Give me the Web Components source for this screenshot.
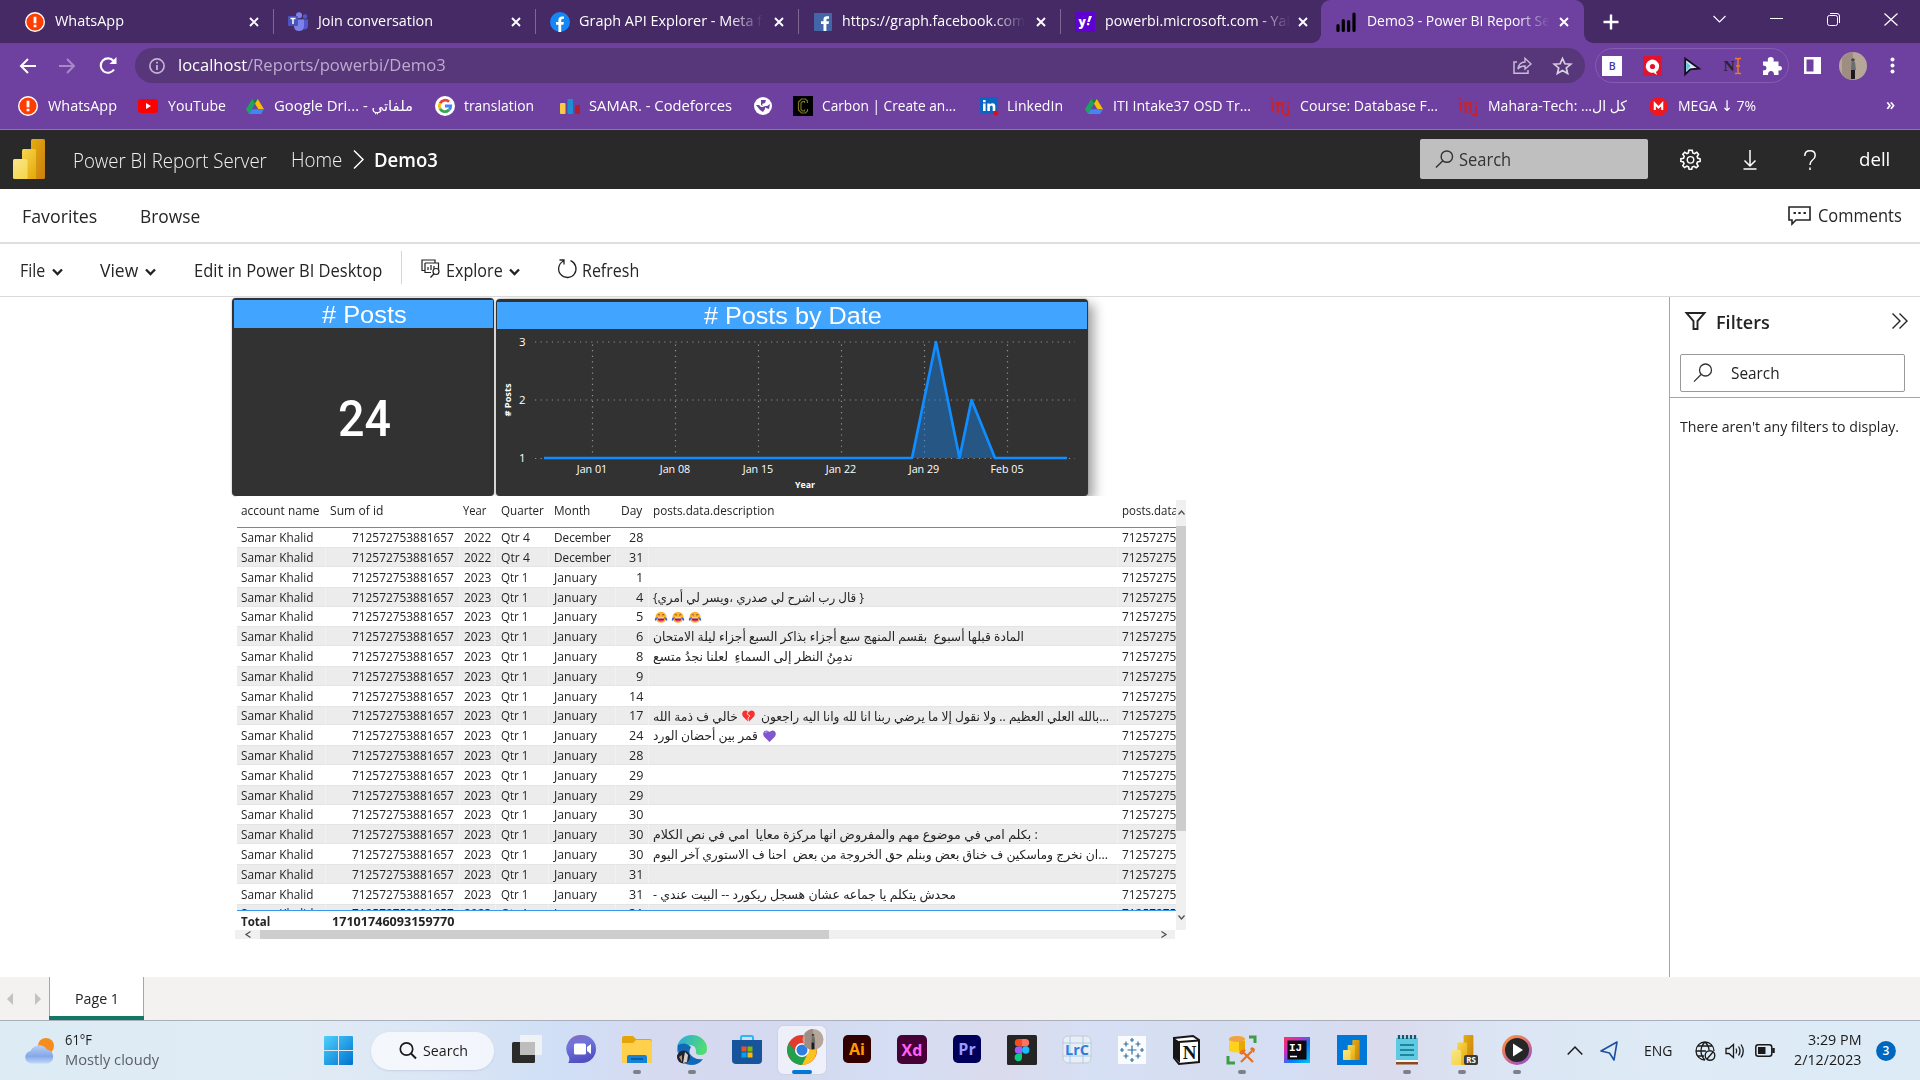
<!DOCTYPE html>
<html lang="en">
<head>
<meta charset="utf-8">
<title>Demo3 - Power BI Report Server</title>
<style>
html,body{margin:0;padding:0;width:1920px;height:1080px;overflow:hidden;background:#fff;font-family:"Open Sans","Noto Sans","DejaVu Sans",sans-serif}
</style>
</head>
<body>
<desktop-screen></desktop-screen>
<script>
const BASE = `<style>:host{display:block}*{box-sizing:border-box}.r{display:flex;align-items:center;width:100%}.c{flex:none;display:flex;align-items:center}svg{display:block;overflow:visible;flex:none}</style>`;

/* A row of items: each is [left, right, html, marginTop]. */
function row(height, items, start = 0, style = '') {
  let end = start, out = '';
  for (const [a, b, html, mt] of items) {
    out += `<div class="c" style="margin-left:${(a - end).toFixed(2)}px;width:${(b - a).toFixed(2)}px;${mt ? `margin-top:${mt}px;` : ''}">${html}</div>`;
    end = b;
  }
  return `<div class="r" style="height:${height}px;${style}">${out}</div>`;
}
function txt(a, b, s, size, style = '', mt = 0) {
  const l = a - .03 * size, r = b + .04 * size;
  return [l, r, `<fit-text w="${(r - l).toFixed(2)}" style="font-size:${size}px;${style}">${s}</fit-text>`, mt];
}
function ico(a, b, h, vb, body, mt = 0) {
  return [a, b, `<svg width="${b - a}" height="${h}" viewBox="${vb}" preserveAspectRatio="none">${body}</svg>`, mt];
}
function define(name, html) {
  customElements.define(name, class extends HTMLElement {
    constructor() {
      super();
      this.attachShadow({ mode: 'open' }).innerHTML = BASE + html;
    }
  });
}

customElements.define('fit-text', class extends HTMLElement {
  constructor() {
    super();
    this.attachShadow({ mode: 'open' }).innerHTML =
      `<style>:host{display:block;white-space:pre;line-height:1.36;flex:none}span{display:inline-block;transform-origin:0 50%}</style><span><slot></slot></span>`;
  }
  connectedCallback() {
    const w = +this.getAttribute('w'), s = this.shadowRoot.querySelector('span');
    this.style.width = w + 'px';
    const n = s.getBoundingClientRect().width;
    if (n) s.style.transform = `scaleX(${w / n})`;
  }
});

/* ---------- shared glyphs ---------- */
const alertG = `<circle cx="10" cy="10" r="10" fill="#fff"/><circle cx="10" cy="10" r="8.6" fill="#ff3d00"/><path d="M8.6 4.8h2.8v6.4H8.6zM8.6 12.7h2.8v2.6H8.6z" fill="#fff"/>`;
const closeX = `<path d="M1 1l8 8M9 1l-8 8" stroke="#fff" stroke-width="1.9"/>`;
const driveG = `<path d="M6.2 1h5.6L18 12h-5.6z" fill="#fbbc04"/><path d="M6.2 1L9 6 3 17 0 12z" fill="#1ea362"/><path d="M5.8 12H18l-3 5H3z" fill="#4285f4"/><path d="M9 6l2.8-5H6.2z" fill="#188038"/>`;
const itiG = `<g stroke="#c4242f" stroke-width="2.4" fill="none"><path d="M2 5v9M1 1v2M7 16V5M5 6.500h9M12 7v9M18 9v9h-5M18 4v2"/></g>`;
const pbiG = (o = '') => `<defs><linearGradient id="a${o}" x2="1" y2="1"><stop stop-color="#e6ad10"/><stop offset="1" stop-color="#c87e0e"/></linearGradient><linearGradient id="b${o}" x2=".7" y2="1"><stop stop-color="#f6d751"/><stop offset="1" stop-color="#e6ad10"/></linearGradient><linearGradient id="c${o}" x2=".6" y2="1"><stop stop-color="#f9e589"/><stop offset="1" stop-color="#f6d751"/></linearGradient></defs><rect x="18" width="14" height="40" rx="1.500" fill="url(#a${o})"/><path d="M9 11.500q0-1.500 1.500-1.500H21.500q1.500 0 1.500 1.500V40H9z" fill="url(#b${o})"/><path d="M0 21.500Q0 20 1.500 20H12.500q2 0 2 2V40H1.500Q0 40 0 38.500z" fill="url(#c${o})"/>`;
const avatar = `<circle cx="14" cy="14" r="14" fill="#b7a69a"/><path d="M3 6Q8 0 14 0v28Q6 27 3 22z" fill="#9e8d82"/><circle cx="14" cy="8" r="1.800" fill="#54413a"/><path d="M12.500 10h3.500l1 8h-5z" fill="#66716f"/><path d="M12 18h4v9h-4z" fill="#1d1a1e"/>`;
const chev = c => `<path d="M1 1.500l4.500 4.500L10 1.500" fill="none" stroke="${c}" stroke-width="2.300"/>`;
const mag = (c, w = 1.4) => `<circle cx="12.500" cy="7" r="6" fill="none" stroke="${c}" stroke-width="${w}"/><path d="M8.300 11.300L1 18.600" stroke="${c}" stroke-width="${w}"/>`;

/* ---------- browser window ---------- */
const tt = (a, b, s, fade) => txt(a, b, s, 14.6, 'color:#fff;' + (fade ? '-webkit-mask:linear-gradient(90deg,#000 calc(100% - 34px),transparent);mask:linear-gradient(90deg,#000 calc(100% - 34px),transparent)' : ''), -1);
const sep = x => [x, x + 1, `<i style="width:1px;height:25px;background:#7d6793"></i>`];
const cl = x => ico(x - 5, x + 5, 10, '0 0 10 10', closeX);

define('tab-strip', `<style>:host{background:#462a65;height:43px}.t{display:flex}.a{background:#6e40a0;width:263px;height:43px;border-radius:9px 9px 0 0;flex:none;position:relative}.a:before,.a:after{content:"";position:absolute;bottom:0;width:9px;height:9px;background:radial-gradient(circle at 0 0,transparent 8.500px,#6e40a0 9px)}.a:before{left:-9px}.a:after{right:-9px;background:radial-gradient(circle at 100% 0,transparent 8.500px,#6e40a0 9px)}</style>
<div class="t">${row(43, [
  ico(25, 45, 20, '0 0 20 20', alertG), tt(55, 123, 'WhatsApp'), cl(254), sep(273),
  ico(288, 308, 19, '0 0 20 19', `<circle cx="11" cy="3.200" r="3" fill="#7b83eb"/><circle cx="17" cy="4.500" r="2.200" fill="#5059c9"/><path d="M13 7.500h7v6q0 4-4 4h-3z" fill="#5059c9"/><path d="M6 7.500h10v6q0 5.500-5 5.500t-5-5z" fill="#7b83eb"/><rect y="4" width="10" height="10" rx="1" fill="#4b53bc"/><path d="M2.500 6.500h5M5 6.500v5.500" stroke="#fff" stroke-width="1.500"/>`),
  tt(318, 432, 'Join conversation'), cl(516), sep(535),
  ico(550, 570, 20, '0 0 20 20', `<circle cx="10" cy="10" r="10" fill="#1586f5"/><path d="M8.400 20v-7.200H6V10h2.400V8q0-3.600 3.600-3.600h2v2.400h-1.300q-1.500 0-1.500 1.500V10h2.700l-.5 2.800h-2.200V20z" fill="#fff"/>`),
  tt(580, 762, 'Graph API Explorer - Meta f', 1), cl(779), sep(798),
  ico(814, 832, 18, '0 0 18 18', `<rect width="18" height="18" rx="1" fill="#4267a9"/><path d="M9.500 18v-7H7V8.300h2.500V6.500q0-3.300 3.300-3.300H15v2.600h-1.300q-1.300 0-1.300 1.200v1.300H15l-.4 2.700h-2.200v7z" fill="#fff"/>`),
  tt(843, 1025, 'https://graph.facebook.com', 1), cl(1041), sep(1060),
  ico(1075, 1095, 20, '0 0 20 20', `<rect width="20" height="20" fill="#5f01d1"/><text x="3.500" y="13.500" font-family="Open Sans" font-weight="800" font-size="12" fill="#fff">y</text><path d="M14 4h3l-2.400 6h-2.200zM12 11h2.200v2.200H12z" fill="#fff"/>`),
  tt(1106, 1290, 'powerbi.microsoft.com - Yal', 1), cl(1303)], 0, 'width:1321px;flex:none')}
<div class="a">${row(43, [
  ico(1336, 1356, 20, '0 0 20 20', `<path d="M2 18.500v-5M7.300 18.500v-10M12.600 18.500v-9M18 18.500V2" stroke="#000" stroke-width="3.200" stroke-linecap="round"/>`),
  tt(1367, 1549, 'Demo3 - Power BI Report Se', 1), cl(1564)], 1321)}</div>
${row(43, [ico(1603, 1619, 16, '0 0 16 16', `<path d="M8 .5v15M.5 8h15" stroke="#fff" stroke-width="2.400"/>`),
  ico(1713, 1726, 8, '0 0 13 8', `<path d="M.5 1l6 6 6-6" fill="none" stroke="#fff" stroke-width="1.100"/>`, -5),
  ico(1770, 1783, 2, '0 0 13 2', `<path d="M0 .500h13" stroke="#fff"/>`, -5),
  ico(1827, 1840, 13, '0 0 13 13', `<rect x=".5" y="2.500" width="10" height="10" rx="2" fill="none" stroke="#fff"/><path d="M3 .5h7q2.500 0 2.500 2.500v7" fill="none" stroke="#fff"/>`, -5),
  ico(1884, 1898, 13, '0 0 14 13', `<path d="M.5.5l13 12M13.500.5l-13 12" stroke="#fff" stroke-width="1.200"/>`, -5)], 1584, 'width:336px;flex:none')}</div>`);

define('address-bar', `<style>:host{height:45px;padding-top:5px;background:#6e40a0}.x{display:flex}.o{background:#573779;border-radius:18px;width:1450px;height:35px}.e{width:194px;height:35px;border:1px solid #845cb0;border-radius:18px;margin-left:10px;flex:none}</style>
<div class="x">${row(35, [
  ico(19, 36, 16, '0 0 17 16', `<path d="M17 8H2M9 1L2 8l7 7" fill="none" stroke="#fff" stroke-width="2"/>`),
  ico(59, 76, 16, '0 0 17 16', `<path d="M0 8h15M8 1l7 7-7 7" fill="none" stroke="#a78ac5" stroke-width="2"/>`),
  ico(99, 117, 17, '0 0 18 17', `<path d="M15 12.500A7.200 7.200 0 1 1 14.500 4" fill="none" stroke="#fff" stroke-width="2.100"/><path d="M17.500 0v7h-7z" fill="#fff"/>`)], 0, 'width:135px;flex:none')}
<div class="o">${row(35, [
  ico(149, 165, 16, '0 0 16 16', `<circle cx="8" cy="8" r="7.100" fill="none" stroke="#c3b4d3" stroke-width="1.700"/><path d="M8 7v5M8 3.800v1.800" stroke="#c3b4d3" stroke-width="1.800"/>`),
  txt(178.500, 246.500, 'localhost', 16.8, 'color:#fff'), txt(247.500, 445, '/Reports/powerbi/Demo3', 16.8, 'color:#bcabcf'),
  ico(1513, 1532, 17, '0 0 19 17', `<path d="M4 5H1v11.300h14V13" fill="none" stroke="#c9bad9" stroke-width="1.500"/><path d="M5 12q1-7 7-7V1.300L18 7l-6 5V9Q7 9 5 12z" fill="none" stroke="#c9bad9" stroke-width="1.400"/>`),
  ico(1553, 1572, 18, '0 0 24 24', `<path d="M12 2l3 7 7.500.6-5.700 5 1.700 7.400L12 18l-6.500 4 1.700-7.400-5.700-5L9 9z" fill="none" stroke="#d8cde3" stroke-width="2.200"/>`)], 135)}</div>
<div class="e">${row(33, [
  ico(1602, 1622, 20, '0 0 20 20', `<rect width="20" height="20" fill="#fff"/><text x="6.700" y="14" font-family="Open Sans" font-size="10.500" font-weight="600" fill="#3f3aa5">B</text>`),
  ico(1643, 1662, 20, '0 0 19 20', `<rect width="19" height="20" fill="#e0142c"/><path d="M9 17a6.700 6.700 0 1 1 4-1l1 3-3-2q-3-2-3-4 0-3 2-3t2 3l3 1" fill="#fff"/><circle cx="9.500" cy="10.500" r="2.600" fill="#e0142c"/>`),
  ico(1684, 1700, 18, '0 0 16 18', `<path d="M1.200 1.500v15.800l5-5 8.800-.8z" fill="#dfeaf5" stroke="#150f22" stroke-width="1.900"/><path d="M2.500 5l4 4-4 5z" fill="#52cbe8"/>`),
  ico(1724, 1742, 18, '0 0 18 18', `<text x="-.5" y="14" font-family="Liberation Serif" font-size="15.500" font-weight="bold" fill="#2a2231">N</text><path d="M11 1.500h2q1 0 1 1 0-1 1-1h2M14 2v14M11 16.500h2q1 0 1-1 0 1 1 1h2M12 9h4" stroke="#f07a28" stroke-width="1.400" fill="none"/>`),
  ico(1763, 1782, 18, '0 0 19 18', `<path d="M0 4.500h5Q4 0 7.800 0T10.500 4.500H15.500V9q3.500-.5 3.500 2.200t-3.500 2.300V18H11q0-4-3-4t-3 4H0v-4.500q3.500 0 3.500-2.500T0 8.500z" fill="#fff"/>`)], 1596)}</div>
${row(35, [
  ico(1804, 1821, 17, '0 0 17 17', `<path d="M0 0h17v17H0zM2.500 2.500v12h7v-12z" fill="#fff" fill-rule="evenodd"/>`),
  ico(1839, 1867, 28, '0 0 28 28', avatar),
  ico(1890, 1895, 17, '0 0 5 17', `<circle cx="2.500" cy="2.500" r="2" fill="#fff"/><circle cx="2.500" cy="8.500" r="2" fill="#fff"/><circle cx="2.500" cy="14.500" r="2" fill="#fff"/>`)], 1789, 'width:131px;flex:none')}</div>`);

const bt = (a, b, s) => txt(a, b, s, 14.6, 'color:#fff', -1);
define('bookmark-bar', `<style>:host{height:42px;background:#6e40a0;border-bottom:1px solid #9470ba}</style>${row(36, [
  ico(18, 38, 20, '0 0 20 20', alertG), bt(48, 116, 'WhatsApp'),
  ico(138, 158, 14, '0 0 20 14', `<rect width="20" height="14" rx="3" fill="#f00"/><path d="M8 4v6l5-3z" fill="#fff"/>`), bt(168, 225, 'YouTube'),
  ico(246, 264, 17, '0 0 18 18', driveG), bt(275, 413, 'Google Dri... - ملفاتي'),
  ico(435, 455, 20, '0 0 20 20', `<circle cx="10" cy="10" r="10" fill="#fff"/><g fill="none" stroke-width="2.800"><path d="M14 5.800A5.700 5.700 0 0 0 5 7.300" stroke="#ea4335"/><path d="M5 7.300a5.700 5.700 0 0 0 0 5.400" stroke="#fbbc05"/><path d="M5 12.700a5.700 5.700 0 0 0 8.800 1.400" stroke="#34a853"/><path d="M13.800 14.100Q15.800 12.500 15.700 10H10" stroke="#4285f4"/></g>`), bt(465, 534, 'translation'),
  ico(560, 580, 17, '0 0 20 17', `<rect y="5" width="5.500" height="11" rx="1" fill="#f8cb45"/><rect x="7.500" y="1" width="5.500" height="15" rx="1" fill="#1c8fce"/><rect x="15" y="7" width="5" height="9" rx="1" fill="#b61e2b"/>`), bt(590, 732, 'SAMAR. - Codeforces'),
  ico(754, 772, 18, '0 0 18 18', `<circle cx="9" cy="9" r="9" fill="#fff"/><path d="M2 8l3 0 2 2 4 0 0 2-2 3-3-2zM7 3l5 0-1 3-3 1 1 2 4 0 3-2-1 5-3-1-1-1-4-2z" fill="#6e40a0"/>`),
  ico(793, 813, 20, '0 0 20 20', `<rect width="20" height="20" fill="#000"/><path d="M14.500 7V5l-2-2h-4l-3 3v8l3 3h4l2-2v-2M11.500 7V5.500h-2L8 7v6.500L9.500 15h2v-1.500" fill="none" stroke="#7a7320" stroke-width="1.200"/>`), bt(823, 956, 'Carbon | Create an...'),
  ico(980, 998, 18, '0 0 18 18', `<rect width="18" height="17" rx="1" fill="#0a66c2"/><path d="M3 6.500h2.600V14H3zM3 3h2.600v2.200H3zM7.300 6.500h2.500v1q1-1.300 2.600-1.300 2.900 0 2.900 3.300V14h-2.600V10q0-1.600-1.300-1.600T9.900 10v4H7.300z" fill="#fff"/><circle cx="16" cy="16" r="2.500" fill="#d11124"/>`), bt(1008, 1063, 'LinkedIn'),
  ico(1085, 1103, 17, '0 0 18 18', driveG), bt(1114, 1251, 'ITI Intake37 OSD Tr...'),
  ico(1271, 1290, 19, '0 0 20 19', itiG), bt(1301, 1438, 'Course: Database F...'),
  ico(1459, 1478, 19, '0 0 20 19', itiG), bt(1489, 1627, 'Mahara-Tech: ...كل ال'),
  ico(1649, 1668, 19, '0 0 19 19', `<circle cx="9.500" cy="9.500" r="9.500" fill="#f0161e"/><path d="M5.800 13V6.700l3.700 3.800 3.700-3.800V13" fill="none" stroke="#fff" stroke-width="2.100"/>`), bt(1679, 1756, 'MEGA ↓ 7%'),
  txt(1887, 1895, '»', 17, 'color:#fff;font-weight:600', -4)])}`);

/* ---------- report server ---------- */
define('portal-header', `<style>:host{height:59px;background:#292929}.x{display:flex;align-items:center}.s{background:#bfbfbf;width:228px;height:40px;border-radius:2px;flex:none;margin-top:-1px}</style><div class="x">
${row(59, [ico(13, 45, 40, '0 0 32 40', pbiG(), -1),
  txt(73.500, 266, 'Power BI Report Server', 19.4, 'color:#f3f3f3;font-weight:350', 3), txt(292, 342, 'Home', 19.4, 'color:#f3f3f3;font-weight:350', 1),
  ico(353, 364, 19, '0 0 11 19', `<path d="M1 .5l9 9-9 9" fill="none" stroke="#fff" stroke-width="1.500"/>`, -1),
  txt(374.500, 437, 'Demo3', 19, 'color:#fff;font-weight:600', 2)], 0, 'width:1420px;flex:none')}
<div class="s">${row(40, [ico(1435, 1453, 18, '0 0 19 19', mag('#333', 1.500)), txt(1460, 1511, 'Search', 17.500, 'color:#333', 2)], 1420)}</div>
${row(59, [
  ico(1680, 1701, 21, '0 0 24 24', `<path d="M10 1.500h4l.6 3 2 .8L19.200 3.700l2 2.300-1.600 2.600.8 2 2.600.6v3l-3 .6-.8 2 1.600 2.600-2.300 2-2.500-1.600-2 .8-.6 2.600h-3l-.6-2.800-2-.8-2.600 1.600-2-2.100L4.600 16.800l-.8-2-2.800-.6v-3.100l3-.6.8-2L3.200 6l2.200-2.300L8 5.300l1.600-.8z" fill="none" stroke="#fff" stroke-width="1.800"/><circle cx="12" cy="12.400" r="3.700" fill="none" stroke="#fff" stroke-width="1.600"/>`),
  ico(1743, 1757, 20, '0 0 14 20', `<path d="M7 0v16M1.500 10.500L7 16l5.500-5.500M.5 19h13" fill="none" stroke="#fff" stroke-width="1.500"/>`),
  ico(1804, 1816, 20, '0 0 12 20', `<path d="M.8 6Q.8.800 6 .8t5.200 4.700Q11.200 8 8.500 10 6 12 6 15M6 17.500V20" fill="none" stroke="#fff" stroke-width="1.500"/>`),
  txt(1860, 1890, 'dell', 19, 'color:#fff', 1)], 1648, 'width:272px;flex:none')}</div>`);

const dk = 'color:#252525;';
define('portal-nav', `<style>:host{height:55px;background:#fff;border-bottom:2px solid #dfdfdf}</style>${row(53, [
  txt(22.500, 96.500, 'Favorites', 17.600, dk, 2), txt(141, 200, 'Browse', 17.600, dk, 2),
  ico(1788, 1811, 19, '0 0 23 19', `<path d="M1 1h21v13H8l-4 4v-4H1z" fill="none" stroke="#252423" stroke-width="1.600"/><path d="M5.500 7h2.400M10.300 7h2.400M15.500 7h2.400" stroke="#252423" stroke-width="2.200"/>`), txt(1818.500, 1901, 'Comments', 17.600, dk, 1)])}`);

define('report-toolbar', `<style>:host{height:53px;background:#fff;border-bottom:1px solid #dadada}</style>${row(53, [
  txt(20.500, 44.500, 'File', 17.600, dk, 1), ico(52, 63, 8, '0 0 11 8', chev('#222'), 2),
  txt(101, 138, 'View', 17.600, dk, 1), ico(145, 156, 8, '0 0 11 8', chev('#222'), 2),
  txt(195, 382, 'Edit in Power BI Desktop', 17.600, dk, 1),
  [401, 402, `<i style="width:1px;height:33px;background:#d6d6d6"></i>`, -7],
  ico(421, 440, 19, '0 0 19 19', `<path d="M4 11.500H1V1h13v3M4 4h13.500v8M4 4v9.500h6M7 11V8M10 11V6M13 10V7" fill="none" stroke="#222" stroke-width="1.200"/><circle cx="15" cy="12.500" r="3" fill="#fff" stroke="#222" stroke-width="1.200"/><path d="M13 14.800L9.500 18.500" stroke="#222" stroke-width="1.300"/>`, -4),
  txt(446.500, 502, 'Explore', 17.600, dk, 1), ico(509, 520, 8, '0 0 11 8', chev('#222'), 2),
  ico(557, 577, 20, '0 0 20 20', `<path d="M6.500 2A8.700 8.700 0 1 0 13.500 1.700M2.500 1H7v4.500" fill="none" stroke="#222" stroke-width="1.300"/>`, -3),
  txt(583, 639, 'Refresh', 17.600, dk, 1)])}`);

define('card-visual', `<style>:host{width:261.500px;height:197.500px;background:#323232;border-radius:4px;padding:2px 1px 0 2px;box-shadow:0 0 2px #999;flex:none}.t{background:#41a4ff;height:28px;margin-bottom:71px}</style>
<div class="t">${row(29, [txt(322.500, 405.500, '# Posts', 24.300, 'color:#fff;font-family:Liberation Sans;line-height:28px')], 234)}</div>
${row(40, [txt(339, 388.500, '24', 50, 'color:#fff;font-family:Roboto;font-weight:500;line-height:50px')], 234)}`);

let gx = '', lb = '';
['Jan 01', 'Jan 08', 'Jan 15', 'Jan 22', 'Jan 29', 'Feb 05'].forEach((s, i) => {
  const x = 592.5 + i * 83, w = i === 5 ? 33 : 30.5;
  gx += `M${x} 345V458`;
  lb += `<text x="${x - w / 2 - .5}" y="473.500" textLength="${w}">${s}</text>`;
});
define('area-chart', `<style>:host{width:592.500px;height:196.500px;background:#323232;border-radius:4px;padding:2.500px 1.500px 0;box-shadow:0 0 2px #888,6px 5px 12px rgba(0,0,0,.36);margin:1px 0 0 2px;flex:none}.t{background:#41a4ff;height:27.500px}</style>
<div class="t">${row(28, [txt(704.500, 880.500, '# Posts by Date', 24.300, 'color:#fff;font-family:Liberation Sans;line-height:28px')], 497)}</div>
<svg width="589" height="165" viewBox="497 329.500 589 165"><path d="M535 342.500H1075M535 400.500H1075M535 459H1075${gx}" stroke="#929292" stroke-width="1.200" stroke-dasharray="1.200 4.420" fill="none"/>
<path d="M912 458.500L936 342.500 959.500 458.500 971.500 400.500 995 458.500z" fill="#118dff" fill-opacity=".4"/><path d="M544 458.500H912L936 342.500 959.500 458.500 971.500 400.500 995 458.500H1067" fill="none" stroke="#118dff" stroke-width="2.700" stroke-linejoin="round"/>
<g fill="#fff" font-family="Open Sans" font-size="10.800">${lb.replace(/textLength/g, 'lengthAdjust="spacingAndGlyphs" textLength')}<text x="519" y="346" font-size="11.500">3</text><text x="519" y="404" font-size="11.500">2</text><text x="519" y="462.500" font-size="11.500">1</text><g font-weight="700" font-size="9.200"><text x="795" y="488" textLength="20" lengthAdjust="spacingAndGlyphs">Year</text><text x="510.500" y="417" transform="rotate(-90 510.500 417)" textLength="33" lengthAdjust="spacingAndGlyphs"># Posts</text></g></g></svg>`);

/* ---------- data table ---------- */
const joy = `<svg width="14" height="12.500" viewBox="-.5 0 15 14"><circle cx="7" cy="7" r="6.200" fill="#fdb32e"/><path d="M3 7h8q0 4.500-4 4.500T3 7z" fill="#9b1742"/><path d="M3.500 7h7v1.300h-7z" fill="#fff"/><path d="M4 10.500q3-1 6 0-3 2-6 0z" fill="#e43d80"/><path d="M3.500 4.500q1-1 2 0M8.500 4.500q1-1 2 0" stroke="#5a3410" fill="none"/><path d="M0 10q-.5-2 2.600-3 0 3-1 3.600T0 10M14 10q.5-2-2.600-3 0 3 1 3.600t1.600-.6" fill="#3b62e8"/></svg>`;
const heart = (f, crack) => `<svg width="13" height="12" viewBox="0 0 13 12"><path d="M6.500 12L1 6.500Q-.8 3.500 1.300 1.300 4-.7 6.500 2 9-.7 11.700 1.300 13.800 3.500 12 6.500z" fill="${f}"/>${crack ? `<path d="M6.500 1L5 4l3 2-2 2 .5 4" fill="none" stroke="#f4dce1" stroke-width="1"/>` : `<path d="M2 3q1-1.500 2.500-1" stroke="#b39af0" stroke-width="1.300" fill="none"/>`}</svg>`;
const ar = (a, b, s) => txt(a, b, s, 12.6, 'color:#252423;line-height:16px', 2);
const desc = {
  3: [ar(653, 863, '{قال رب اشرح لي صدري ،ويسر لي أمري }')],
  4: [[654, 668, joy, 1], [671.500, 685.500, joy, 1], [688.500, 702.500, joy, 1]],
  5: [ar(653, 1023, 'المادة قبلها أسبوع  بقسم المنهج سبع أجزاء بذاكر السبع أجزاء ليلة الامتحان')],
  6: [ar(653, 852, 'ندمِنُ النظر إلى السماءِ  لعلنا نجدُ متسع')],
  9: [ar(653, 737, 'خالي ف ذمة الله'), [742, 755, heart('#f8312f', 1), 1], ar(761, 1108, 'بالله العلي العظيم .. ولا نقول إلا ما يرضي ربنا انا لله وانا اليه راجعون...')],
  10: [ar(653, 757, 'قمر بين أحضان الورد'), [763, 776, heart('#8157cf'), 1]],
  15: [ar(653, 1037, 'بكلم امي في موضوع مهم والمفروض انها مركزة معايا  امي في نص الكلام :')],
  16: [ar(653, 1107, 'ان نخرج وماسكين ف خناق بعض وبنلم حق الخروجة من بعض  احنا ف الاستوري آخر اليوم...')],
  18: [ar(653, 955, '- محدش يتكلم يا جماعه عشان هسجل ريكورد -- البيت عندي')],
};
const days = [28, 31, 1, 4, 5, 6, 8, 9, 14, 17, 24, 28, 29, 29, 30, 30, 30, 31, 31, 31];
const c12 = (a, b, s, e = '', mt = 2) => txt(a, b, s, 12.100, 'color:#252423;' + e, mt);
const line = x => [x, x + 1, `<i style="width:1px;height:20px;background:#fff;opacity:.35"></i>`];
let body = '';
days.forEach((d, i) => {
  const dec = i < 2, day = String(d), lines = i % 2 ? line : () => null;
  const wide = day.length > 1;
  body += row(19.8, [c12(241.500, 313, 'Samar Khalid'), lines(325), c12(352.500, 453.500, '712572753881657'), lines(459), c12(464.500, 491, dec ? '2022' : '2023'), lines(495),
    c12(501, !dec ? 527.500 : 529, dec ? 'Qtr 4' : 'Qtr 1'), lines(548), c12(554, dec ? 610 : 596, dec ? 'December' : 'January'), lines(615),
    c12(wide ? 629.500 : 636.500, 643, day), lines(648), ...(desc[i] || []), lines(1117), c12(1122, 1175.500, '71257275')].filter(Boolean), 237,
    `flex:none;${i % 2 ? 'background:#ececec;box-shadow:inset 0 1px #e4e4e4,inset 0 -1px #e4e4e4' : ''}`);
});
define('table-visual', `<style>:host{width:952px;height:444px;background:#fff;position:relative;padding-top:4px}.g{display:flex}.l{width:939px}.b{height:384.500px;overflow:hidden;border-top:1.500px solid #3599f0;border-bottom:1.500px solid #3599f0}.h{overflow:hidden}.v{width:10px;height:430px;background:#f0f0f0;display:flex;flex-direction:column;align-items:center;flex:none}.v i{width:10px;height:305px;background:#cdcdcd}.z{display:flex;align-items:center;height:9px;background:#f0f0f0;width:940px;margin-left:-2px}.z i{width:569px;height:9px;background:#cdcdcd;margin-left:9px}</style>
<div class="g"><div class="l"><div class="h">${row(26.500, [
  c12(241.500, 319, 'account name', '', 0), c12(330.500, 383, 'Sum of id', '', 0), c12(463.500, 486, 'Year', '', 0), c12(501, 543, 'Quarter', '', 0), c12(554.500, 590, 'Month', '', 0), c12(621.500, 642, 'Day', '', 0), c12(653.500, 774, 'posts.data.description', '', 0), c12(1122, 1177, 'posts.data', '', 0)], 237, 'align-items:flex-start;padding-top:3px')}</div>
<div class="b">${body}</div>${row(19, [c12(241.500, 270, 'Total', 'font-weight:700', 3), c12(332, 453.500, '17101746093159770', 'font-weight:700', 3)], 237)}</div>
<div class="v"><svg width="7" height="5" viewBox="0 0 7 5" style="margin:10px 0 11px"><path d="M.5 4.500l3-3.500 3 3.500" fill="none" stroke="#505050" stroke-width="1.300"/></svg><i></i><svg width="7" height="5" viewBox="0 0 7 5" style="margin-top:84px"><path d="M.5.5l3 3.500 3-3.500" fill="none" stroke="#505050" stroke-width="1.300"/></svg></div></div>
<div class="z"><svg width="6" height="7" viewBox="0 0 6 7" style="margin-left:10px"><path d="M5.500.5l-4.500 3 4.500 3" fill="none" stroke="#505050" stroke-width="1.300"/></svg><i></i><svg width="6" height="7" viewBox="0 0 6 7" style="margin-left:332px"><path d="M.5.5l4.500 3-4.500 3" fill="none" stroke="#505050" stroke-width="1.300"/></svg></div>`);

define('filter-pane', `<style>:host{width:251px;border-left:1px solid #a6a6a6;flex:none}.b{margin:18px 0 0 10px;width:225px;height:38px;border:1px solid #999;border-radius:2px}.s{height:1px;background:#a6a6a6;margin:5px 0 18px}</style>
${row(39, [ico(1684.500, 1705.500, 18, '0 0 21 18', `<path d="M1.500 1h18l-7 8v8h-4V9z" fill="none" stroke="#252423" stroke-width="1.900"/>`, 9),
  txt(1716.500, 1769, 'Filters', 18.600, 'color:#252423;font-weight:600', 11),
  ico(1892, 1908, 16, '0 0 16 16', `<path d="M.5.5L8 8 .5 15.500M7.500.5L15 8l-7.500 7.500" fill="none" stroke="#252423" stroke-width="1.400"/>`, 8)], 1670)}
<div class="b">${row(36, [ico(1693, 1713, 20, '0 0 20 20', mag('#333', 1.300)), txt(1731, 1778.500, 'Search', 15.800, 'color:#252423', 1)], 1681)}</div><div class="s"></div>
${row(22, [txt(1680.500, 1898.500, "There aren't any filters to display.", 14.600, 'color:#252423')], 1670)}`);

define('report-canvas', `<style>:host{display:flex;height:680px}.m{width:1669px;padding:1px 0 0 232px;overflow:hidden}.v{display:flex;height:198px}table-visual{margin-left:5px}</style>
<div class="m"><div class="v"><card-visual></card-visual><area-chart></area-chart></div><table-visual></table-visual></div><filter-pane></filter-pane>`);

define('page-tabs', `<style>:host{height:44px;background:#f3f2f1;display:flex;border-bottom:1px solid #aab0bb}.p{width:95px;height:43px;background:#fff;border:1px solid #a6a6a6;border-width:0 1px;flex:none}.p i{display:block;height:4px;background:#117865;margin:0 -1px}</style>
${row(43, [ico(7, 13, 12, '0 0 6 12', `<path d="M6 0v12L0 6z" fill="#c3c2c1"/>`), ico(35, 41, 12, '0 0 6 12', `<path d="M0 0v12l6-6z" fill="#c3c2c1"/>`)], 0, 'width:49px;flex:none')}<div class="p">${row(39, [txt(75.500, 118.500, 'Page 1', 14.600, 'color:#252423', 4)], 50)}<i></i></div>`);

/* ---------- taskbar ---------- */
const adobe = (bg, fg, s, fs = 16) => `<rect x="1" width="28" height="28" rx="5" fill="${bg}"/><text x="15" y="20" text-anchor="middle" font-family="Open Sans" font-weight="700" font-size="${fs}" fill="${fg}">${s}</text>`;
const apps = [
  [`<rect y="7" width="23" height="21" rx="1.500" fill="#2b2b2b"/><rect x="8" width="22" height="20" rx="1" fill="#f5f5f5" fill-opacity=".85"/><rect x="8" y="7" width="15" height="13" fill="#bdbdbd"/>`],
  [`<defs><linearGradient id="ch" x2=".3" y2="1"><stop stop-color="#8a69b8"/><stop offset=".4" stop-color="#6f74dd"/><stop offset="1" stop-color="#514fc2"/></linearGradient></defs><path d="M15 0a14 14 0 0 1 0 28H1q2-2 1-6A14 14 0 0 1 15 0z" fill="url(#ch)"/><rect x="7" y="8.500" width="12" height="11" rx="1.500" fill="#fff"/><path d="M20 12l4-3v10l-4-3z" fill="#fff"/>`],
  [`<path d="M0 3q0-2 2-2h9l3 3h14q2 0 2 2v20q0 2-2 2H2q-2 0-2-2z" fill="#e5a50a"/><path d="M0 8h11l3-3h14q2 0 2 2v19q0 2-2 2H2q-2 0-2-2z" fill="#ffd04c"/><path d="M5 28v-6q0-2 2-2h16q2 0 2 2v6z" fill="#1583d8"/><path d="M9 24h12" stroke="#0b5394" stroke-width="1.500"/>`, 1],
  [`<defs><linearGradient id="ed" x2="1" y2=".3"><stop stop-color="#2ba5e6"/><stop offset="1" stop-color="#4fdc73"/></linearGradient></defs><path d="M0 14A15 14 0 0 1 30 14q0 6-7 6-5 0-4-4 0-6-7-6-8 0-12 8z" fill="url(#ed)"/><path d="M1 10q7-4 13 2-4 6 2 10 4 3 10 2-4 6-12 6Q0 29 1 10z" fill="#1268b8"/><circle cx="6.500" cy="22" r="6.500" fill="#1c2332"/><path d="M8 17l3 3-1 7-4 1z" fill="#d7ccd0"/><path d="M2 22l3-2v7z" fill="#bf8d55"/>`, 1],
  [`<path d="M9 6V2.500Q9 1 10.500 1h9Q21 1 21 2.500V6" fill="none" stroke="#27b9f2" stroke-width="2"/><path d="M0 5h30v20q0 4-4 4H4q-4 0-4-4z" fill="#17549b"/><path d="M9.500 11.500h5v5h-5z" fill="#f25022"/><path d="M15.500 11.500h5v5h-5z" fill="#7fba00"/><path d="M9.500 17.500h5v5h-5z" fill="#00a4ef"/><path d="M15.500 17.500h5v5h-5z" fill="#ffb900"/>`],
  [`<circle cx="15" cy="15" r="15" fill="#e33b2e"/><path d="M15 15L28 8A15 15 0 0 1 15 30z" fill="#fcc31e"/><path d="M2 8a15 15 0 0 0 13 22l6-12-12-1z" fill="#22a04b"/><circle cx="15" cy="15" r="7" fill="#fff"/><circle cx="15" cy="15" r="5.500" fill="#2f7de1"/><g transform="translate(15.500 -6) scale(.75)">${avatar}</g>`, 2],
  [adobe('#330000', '#ff9a00', 'Ai')],
  [`<rect width="30" height="29" rx="5" fill="#470137"/><text x="15" y="21" text-anchor="middle" font-family="Open Sans" font-weight="700" font-size="16" fill="#ff61f6">Xd</text>`],
  [adobe('#00005b', '#9999ff', 'Pr')],
  [`<rect width="30" height="30" rx="1.500" fill="#252526"/><path d="M15 4h-3.500a3.700 3.700 0 0 0 0 7.400H15z" fill="#f24e1e"/><path d="M15 4h3.500a3.700 3.700 0 0 1 0 7.400H15z" fill="#ff7262"/><path d="M15 11.400h-3.500a3.700 3.700 0 0 0 0 7.400H15z" fill="#a259ff"/><circle cx="18.700" cy="15" r="3.700" fill="#1abcfe"/><path d="M15 18.800h-3.500a3.700 3.700 0 1 0 3.500 3.700z" fill="#0acf83"/>`],
  [`<rect x="1" y="1" width="28" height="27" rx="5" fill="#e9eef4" stroke="#c3cbd6"/><path d="M8 1v27M21 1v27M1 8h28M1 21h28" stroke="#9dc4ea" stroke-width=".8"/><text x="15" y="20" text-anchor="middle" font-family="Open Sans" font-weight="700" font-size="14.500" fill="#2b7de0">LrC</text>`],
  [`<rect x="1" y="1" width="28" height="28" fill="#fafbfc"/><g stroke="#33709c" stroke-width="1.200"><path d="M15 10.500v9M10.500 15h9M15 3v4M13 5h4M15 23v4M13 25h4M5 13v4M3 15h4M25 13v4M23 15h4M9 6.500v5M6.500 9h5M21 6.500v5M18.500 9h5M9 18.500v5M6.500 21h5M21 18.500v5M18.500 21h5"/></g>`],
  [`<path d="M2 3l19-2 6 4v22l-20 2-5-6z" fill="#fff" stroke="#161616" stroke-width="2"/><path d="M2 3l6 4v21l-6-6z" fill="#161616"/><path d="M7 7l20-1.500" stroke="#161616" stroke-width="2"/><text x="17.500" y="24" text-anchor="middle" font-family="Liberation Serif" font-weight="bold" font-size="19" fill="#161616">N</text>`],
  [`<path d="M2 4q0-3 8-3t8 3v12q-8 3-16 0z" fill="#ffd21b"/><path d="M12 6h6v10h-6z" fill="#e9a800"/><ellipse cx="10" cy="4" rx="8" ry="3" fill="#f0a14c"/><path d="M22 2h6v6M8 28H1v-7" fill="none" stroke="#3f9b46" stroke-width="3"/><path d="M14 27l11-11M16 17l10 10" stroke="#e8701e" stroke-width="2.200"/><path d="M12 18q3-5 7-3l-4 5zM23 14l4 4 1-4-3-2z" fill="#e8701e"/>`, 1],
  [`<defs><linearGradient id="ij" x2="1" y2="1"><stop stop-color="#fe315d"/><stop offset=".35" stop-color="#c230c8"/><stop offset=".6" stop-color="#087cfa"/><stop offset="1" stop-color="#07c3f2"/></linearGradient></defs><rect x="2" y="2" width="26" height="26" fill="url(#ij)"/><rect x="5.500" y="5.500" width="19" height="19" fill="#0c0b14"/><text x="7" y="15.500" font-family="Liberation Mono" font-weight="bold" font-size="11" fill="#fff">IJ</text><path d="M8 21.500h7" stroke="#fff" stroke-width="1.500"/>`],
  [`<rect width="30" height="30" fill="#0078d7"/><g transform="translate(6 5) scale(.52 .5)">${pbiG('t')}</g>`],
  [`<path d="M4 3h22v24H4z" fill="#5fcbe2"/><path d="M4 25h22v2H4z" fill="#f3f3f3"/><path d="M4 27h22v2.500H4z" fill="#8a4a1b"/><path d="M8 10h14M8 15h14M8 20h14" stroke="#0d6f87" stroke-width="1.700"/><path d="M7 0v4M11 0v4M15 0v4M19 0v4M23 0v4" stroke="#14596f" stroke-width="2.300"/>`, 1],
  [`<g transform="translate(4 0) scale(.7 .75)">${pbiG('u')}</g><rect x="17" y="20" width="14" height="10" rx="2" fill="#3b3a39"/><text x="24" y="28" text-anchor="middle" font-family="Open Sans" font-weight="700" font-size="8" fill="#fff">RS</text>`, 1],
  [`<defs><linearGradient id="mp" x2=".7" y2="1"><stop stop-color="#ff9a3c"/><stop offset=".5" stop-color="#e07272"/><stop offset="1" stop-color="#9b50c8"/></linearGradient></defs><circle cx="15" cy="15" r="15" fill="url(#mp)"/><circle cx="15" cy="15" r="12" fill="#262626"/><path d="M11 8.500v13L21 15z" fill="#fff"/>`, 1],
];
customElements.define('task-app', class extends HTMLElement {
  constructor() { super(); this.attachShadow({ mode: 'open' }); }
  connectedCallback() {
    const [g, st] = apps[+this.getAttribute('n')];
    this.shadowRoot.innerHTML = BASE + `<style>:host{display:flex;flex-direction:column;align-items:center;width:55.030px;height:59px;padding-top:5px;flex:none}.k{width:48px;height:48px;border-radius:5px;padding:9px;display:flex;flex-direction:column;align-items:center;${st === 2 ? 'background:rgba(255,255,255,.6);box-shadow:0 0 1px #99a;' : ''}}i{width:${st === 2 ? 20 : 8}px;height:4px;border-radius:2px;background:${st === 2 ? '#0078d4' : '#7d8088'};flex:none;margin-top:${5}px;${st ? '' : 'visibility:hidden'}}</style><div class="k"><svg width="30" height="30" viewBox="0 0 30 30">${g}</svg><i></i></div>`;
  }
});
const tb = (a, b, s, f = 14.600, st = 'color:#1a1a1a') => txt(a, b, s, f, st);
define('task-bar', `<style>:host{height:59px;background:linear-gradient(90deg,#ddebf5 0,#e0ebf5 16%,#dce7f5 22%,#d0dff6 29%,#d6d9ef 35%,#d3daf0 42%,#d5def4 47%,#dadbec 52%,#d6e0f5 57%,#d6ddf0 63%,#d4def4 67%,#dadbed 72%,#dbe5f4 78%,#dfebf6 88%,#dcebf6)}.x{display:flex}.w{width:499px;display:flex;align-items:center;flex:none}.q{width:123px;height:38px;border-radius:19px;background:rgba(255,255,255,.68);flex:none;box-shadow:0 1px 2px rgba(80,90,120,.15)}.tx{width:260px;flex:none;margin-top:-2px}.d{width:75px;flex:none;margin-top:-2px}.tr{display:flex;align-items:center;flex:none}</style>
<div class="x"><div class="w">
${row(59, [ico(25, 55, 26, '0 0 30 26', `<defs><linearGradient id="cl" y2="1" x2="0"><stop stop-color="#b9cff5"/><stop offset=".6" stop-color="#84a7e7"/><stop offset="1" stop-color="#c3d8fa"/></linearGradient></defs><circle cx="21" cy="8" r="8" fill="#f58c1c"/><path d="M6 25.500a6.300 6.300 0 0 1-.5-12.500A9.500 9.500 0 0 1 22 11.500a7.200 7.200 0 0 1 1 14z" fill="url(#cl)"/>`, 1)], 0, 'width:64px;flex:none')}
<div class="tx">${row(20, [tb(65, 91, '61°F')], 64)}${row(20, [tb(65, 158, 'Mostly cloudy', 14.600, 'color:#5c6066')], 64)}</div>
<svg width="29" height="29" viewBox="0 0 29 29"><defs><linearGradient id="wn" x2="1" y2="1"><stop stop-color="#4dd0fb"/><stop offset="1" stop-color="#0072d0"/></linearGradient></defs><path d="M0 1q0-1 1-1h13v14H0zM15 0h13q1 0 1 1v13H15zM0 15h14v14H1q-1 0-1-1zM15 15h14v13q0 1-1 1H15z" fill="url(#wn)"/></svg>
<div class="q" style="margin-left:18px">${row(38, [ico(399, 417, 17, '0 0 18 17', `<circle cx="7.500" cy="7" r="6.200" fill="none" stroke="#1a1a1a" stroke-width="1.700"/><path d="M12 11.500l5 5" stroke="#1a1a1a" stroke-width="1.900"/>`), tb(423.500, 467.500, 'Search')], 371)}</div></div>
${apps.map((_, i) => `<task-app n="${i}"></task-app>`).join('')}
<div class="tr">${row(59, [
  ico(1567, 1583, 9, '0 0 16 9', `<path d="M.7 8.500L8 1l7.300 7.500" fill="none" stroke="#1a1a1a" stroke-width="1.500"/>`),
  ico(1600, 1618, 20, '0 0 18 20', `<path d="M17 1L1 10l8.500 2L14 19z" fill="none" stroke="#1b50a0" stroke-width="1.600" stroke-linejoin="round"/>`),
  tb(1644.500, 1672, 'ENG', 14.200),
  ico(1695, 1716, 20, '0 0 21 20', `<path d="M10 19a9 9 0 1 1 9-9M1 10h10M2.500 5h15M2.500 15H9M10 1Q6 5 6 10t4 9M10 1q4 4 4 8" fill="none" stroke="#1a1a1a" stroke-width="1.300"/><circle cx="15" cy="14.500" r="4.800" fill="none" stroke="#1a1a1a" stroke-width="1.400"/><path d="M12 18l6-7" stroke="#1a1a1a" stroke-width="1.300"/>`),
  ico(1725, 1745, 16, '0 0 20 16', `<path d="M1 5.500h3l4.500-4v13l-4.500-4H1z" fill="none" stroke="#1a1a1a" stroke-width="1.300"/><path d="M11 5.500q1.500 2.500 0 5M13.500 3.500q3 4.500 0 9M16 1.500q4.500 6.500 0 13" fill="none" stroke="#1a1a1a" stroke-width="1.300"/>`),
  ico(1755, 1775, 13, '0 0 20 13', `<rect x=".8" y=".8" width="16" height="11.400" rx="2.500" fill="none" stroke="#1a1a1a" stroke-width="1.500"/><rect x="3" y="3" width="7.500" height="7" fill="#1a1a1a"/><path d="M18.500 4v5" stroke="#1a1a1a" stroke-width="2.500"/>`)], 1544.6, 'width:245px;flex:none')}
<div class="d">${row(20, [tb(1809, 1861.500, '3:29 PM')], 1789.6)}${row(20, [tb(1795, 1861.500, '2/12/2023')], 1789.6)}</div>
<svg width="20" height="20" viewBox="0 0 20 20" style="margin-left:11.500px"><circle cx="10" cy="10" r="9.900" fill="#0067c0"/><text x="10" y="14.300" text-anchor="middle" font-family="Open Sans" font-size="12" font-weight="600" fill="#fff">3</text></svg></div></div>`);

define('desktop-screen', `<tab-strip></tab-strip><address-bar></address-bar><bookmark-bar></bookmark-bar><portal-header></portal-header><portal-nav></portal-nav><report-toolbar></report-toolbar><report-canvas></report-canvas><page-tabs></page-tabs><task-bar></task-bar>`);
</script>
</body>
</html>
